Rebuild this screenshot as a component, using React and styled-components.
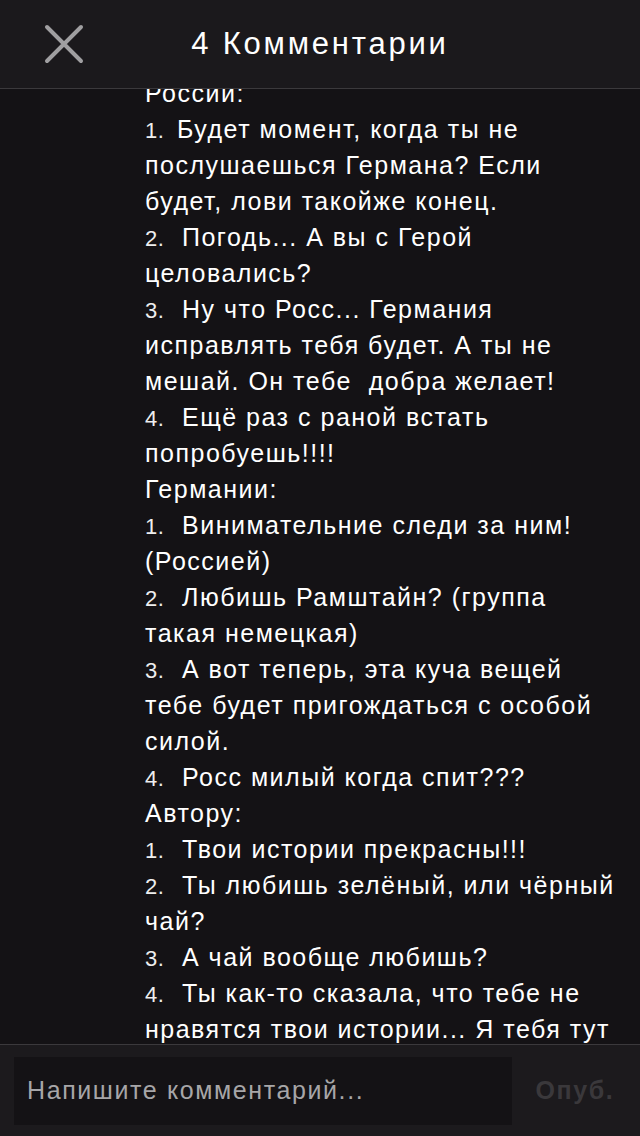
import React from 'react';
import styled, { createGlobalStyle } from 'styled-components';

const GlobalStyle = createGlobalStyle`
  html, body {
    margin: 0;
    padding: 0;
    background: #141215;
  }
  * { box-sizing: border-box; }
`;

const Screen = styled.div`
  width: 640px;
  height: 1136px;
  display: flex;
  flex-direction: column;
  background: #141215;
  font-family: "Liberation Sans", Arial, sans-serif;
  color: #fff;
  overflow: hidden;
`;

const Header = styled.header`
  height: 89px;
  flex: none;
  display: grid;
  grid-template-columns: 128px 1fr 128px;
  align-items: center;
  background: #1b191c;
  border-bottom: 1px solid #3b393c;
  padding-bottom: 1px;
`;

const CloseButton = styled.button`
  justify-self: start;
  margin-left: 42px;
  width: 44px;
  height: 44px;
  padding: 0;
  border: none;
  background: none;
  display: flex;
  align-items: center;
  justify-content: center;
  cursor: pointer;
`;

const Title = styled.h1`
  margin: 0;
  text-align: center;
  font-size: 31px;
  font-weight: 400;
  letter-spacing: 2.8px;
  color: #fff;
`;

const Feed = styled.main`
  flex: 1;
  overflow: hidden;
  padding-left: 145px;
`;

const Body = styled.div`
  margin-top: -14px;
`;

const Line = styled.div`
  height: 36px;
  line-height: 36px;
  font-size: 25px;
  letter-spacing: 1.5px;
  white-space: nowrap;
  color: #fff;
`;

const Num = styled.span`
  display: inline-block;
  width: ${p => p.$w || 37}px;
  font-size: 22px;
  font-weight: 300;
  letter-spacing: 0.5px;
  color: #eee;
`;

const Footer = styled.footer`
  flex: none;
  height: 92px;
  display: flex;
  align-items: center;
  padding: 0 14px;
  background: #1c1a1d;
  border-top: 1px solid #3b393c;
`;

const Input = styled.input`
  width: 498px;
  height: 68px;
  border: none;
  outline: none;
  background: #141215;
  color: #fff;
  padding: 0 13px;
  font-family: "Liberation Sans", Arial, sans-serif;
  font-size: 25px;
  letter-spacing: 1.6px;

  &::placeholder {
    color: #a7a6a8;
  }
`;

const Publish = styled.button`
  flex: 1;
  height: 68px;
  border: none;
  background: none;
  padding: 0 0 0 12px;
  text-align: center;
  font-family: "Liberation Sans", Arial, sans-serif;
  font-size: 25px;
  font-weight: 700;
  letter-spacing: 1.6px;
  color: #3a383b;
`;

const lines = [
  [null, 'России:'],
  ['1.', 'Будет момент, когда ты не', 32],
  [null, 'послушаешься Германа? Если'],
  [null, 'будет, лови такойже конец.'],
  ['2.', 'Погодь... А вы с Герой'],
  [null, 'целовались?'],
  ['3.', 'Ну что Росс... Германия'],
  [null, 'исправлять тебя будет. А ты не'],
  [null, 'мешай. Он тебе\u00a0 добра желает!'],
  ['4.', 'Ещё раз с раной встать'],
  [null, 'попробуешь!!!!'],
  [null, 'Германии:'],
  ['1.', 'Винимательние следи за ним!'],
  [null, '(Россией)'],
  ['2.', 'Любишь Рамштайн? (группа'],
  [null, 'такая немецкая)'],
  ['3.', 'А вот теперь, эта куча вещей'],
  [null, 'тебе будет пригождаться с особой'],
  [null, 'силой.'],
  ['4.', 'Росс милый когда спит???'],
  [null, 'Автору:'],
  ['1.', 'Твои истории прекрасны!!!'],
  ['2.', 'Ты любишь зелёный, или чёрный'],
  [null, 'чай?'],
  ['3.', 'А чай вообще любишь?'],
  ['4.', 'Ты как-то сказала, что тебе не'],
  [null, 'нравятся твои истории... Я тебя тут'],
];

const CloseIcon = () => (
  <svg width="40" height="40" viewBox="0 0 40 40">
    <path d="M3 3 L37 37 M37 3 L3 37" stroke="#a09fa1" strokeWidth="4" strokeLinecap="round" />
  </svg>
);

export default function App() {
  return (
    <Screen>
      <GlobalStyle />
      <Header>
        <CloseButton aria-label="Закрыть">
          <CloseIcon />
        </CloseButton>
        <Title>4 Комментарии</Title>
        <span />
      </Header>
      <Feed>
        <Body>
          {lines.map(([num, text, w], i) => (
            <Line key={i}>
              {num && <Num $w={w}>{num}</Num>}
              {text}
            </Line>
          ))}
        </Body>
      </Feed>
      <Footer>
        <Input placeholder="Напишите комментарий..." />
        <Publish>Опуб.</Publish>
      </Footer>
    </Screen>
  );
}
